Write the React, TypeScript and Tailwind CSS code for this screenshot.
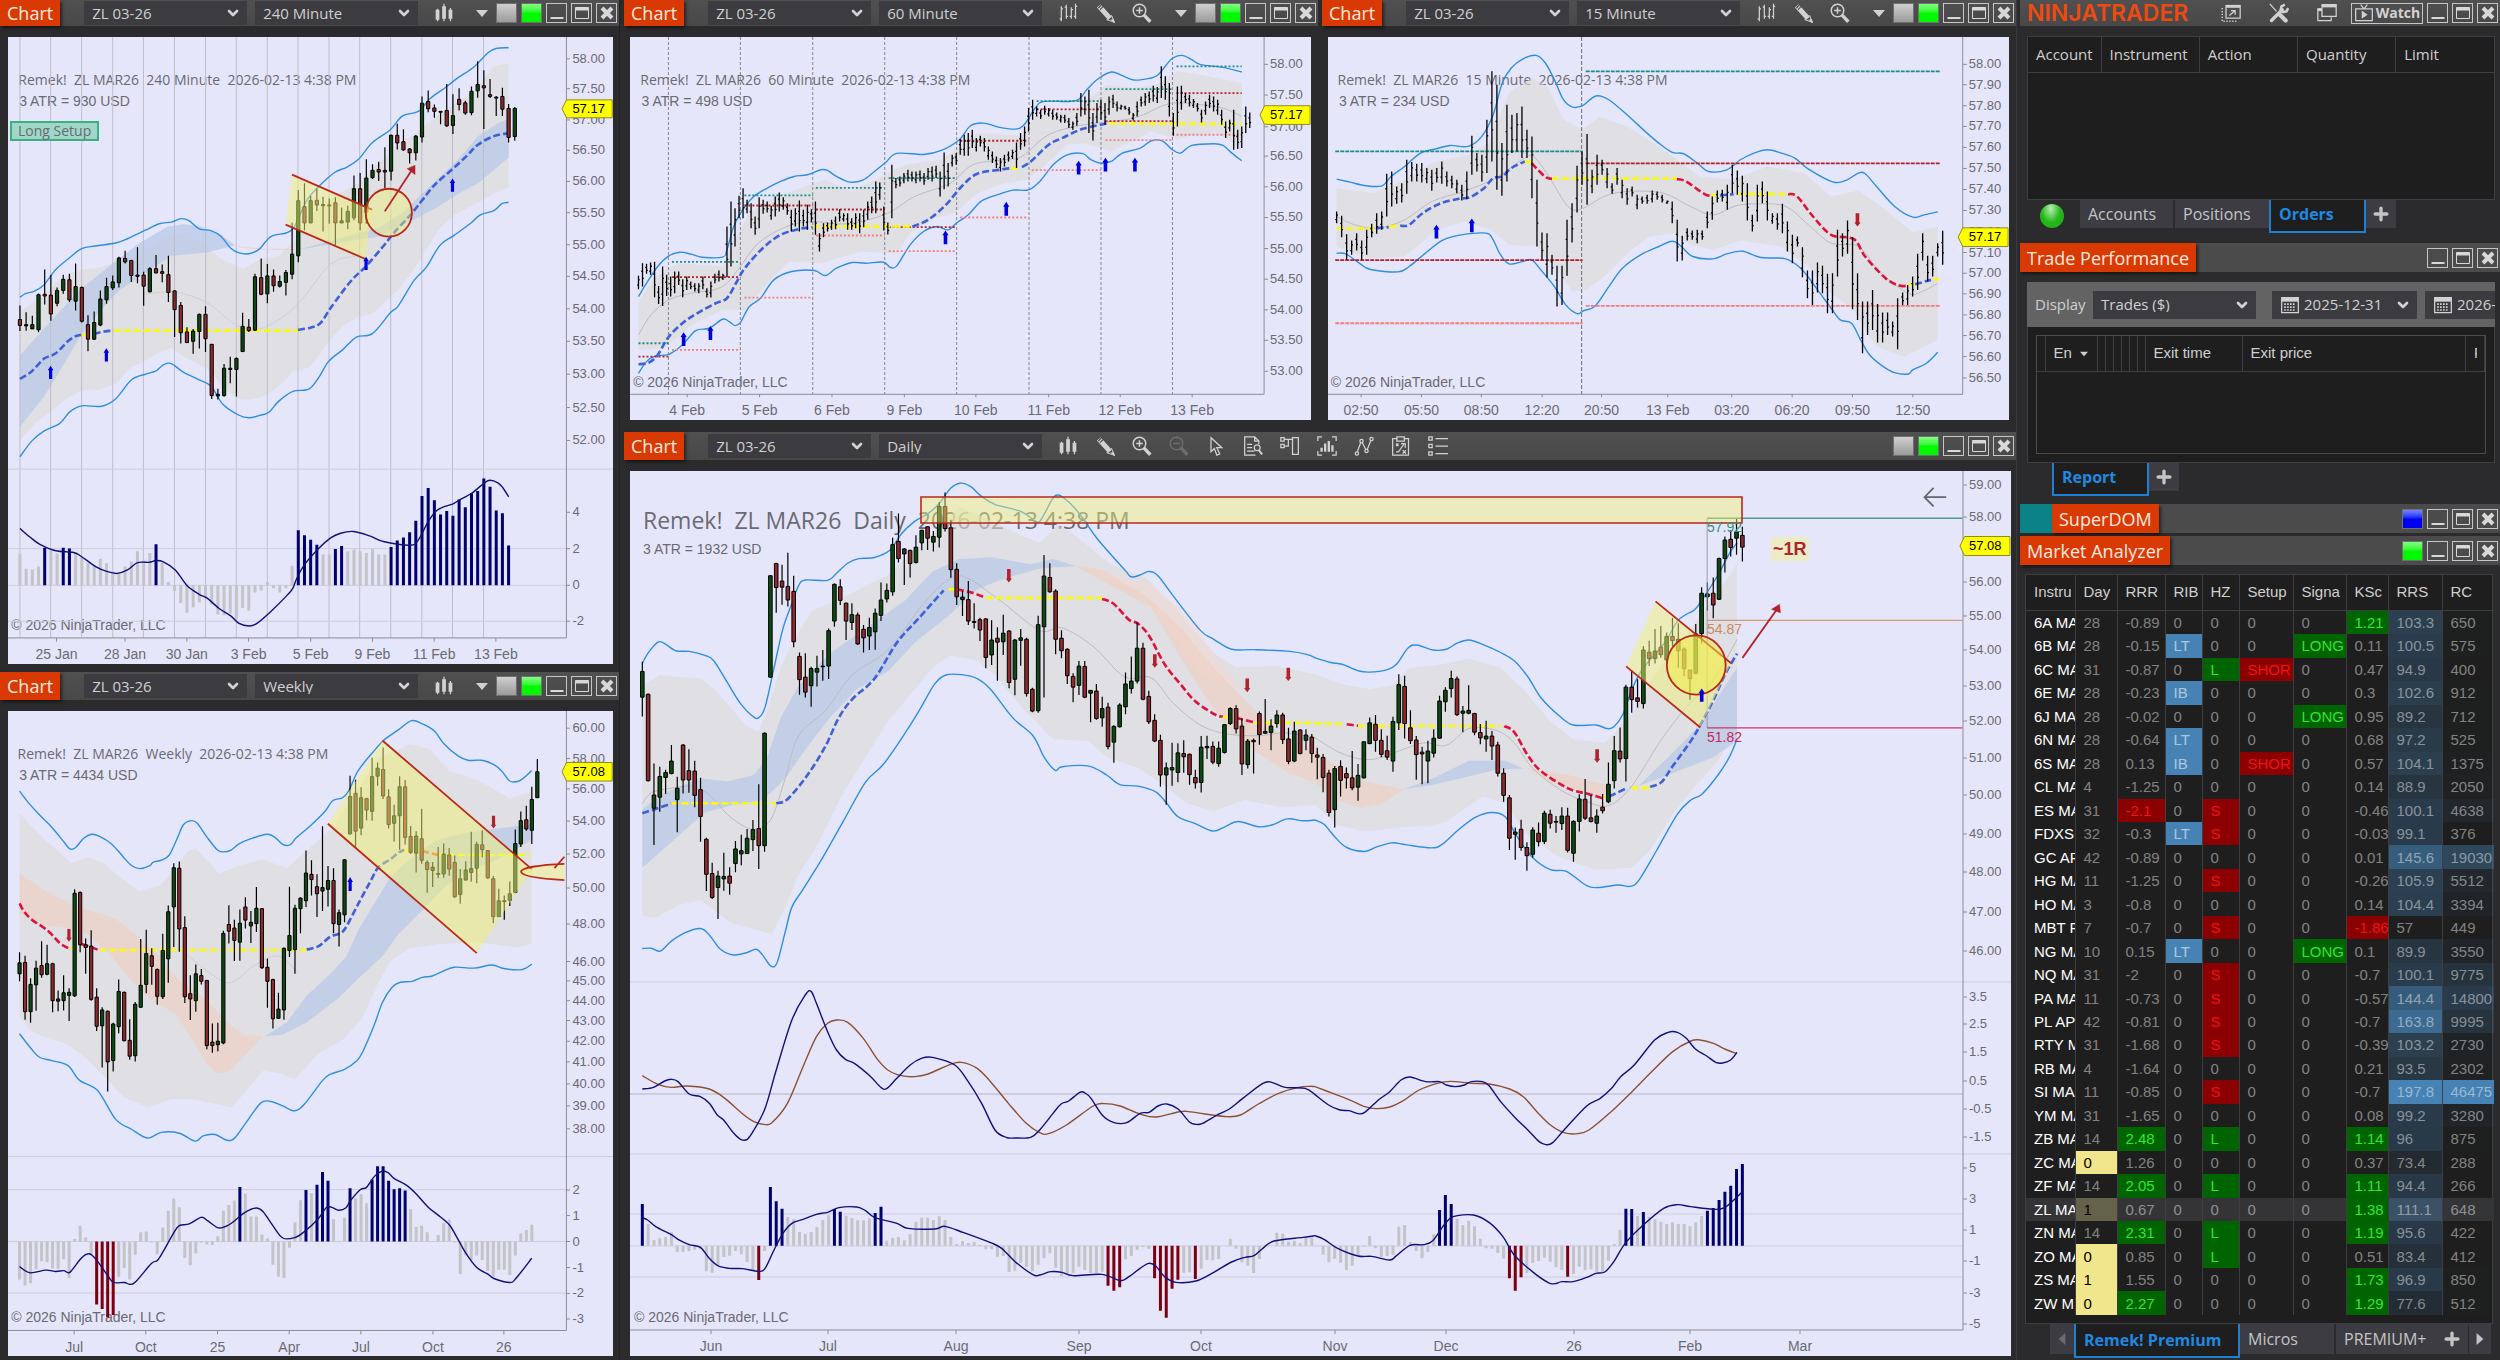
import type { ReactNode } from "react";
import { ChevronDown, Plus } from "lucide-react";

type Label = [string, number];

/* ---------- path helpers ---------- */

const toPoints = (s: string) =>
  s
    .trim()
    .split(/\s+/)
    .map((p) => p.split(",").map(Number));

// Catmull-Rom spline through "x,y x,y ..."
function curve(s: string) {
  const p = toPoints(s);
  let d = `M${p[0][0]} ${p[0][1]}`;
  for (let i = 0; i < p.length - 1; i++) {
    const a = p[i - 1] ?? p[i];
    const b = p[i];
    const c = p[i + 1];
    const e = p[i + 2] ?? c;
    d += `C${b[0] + (c[0] - a[0]) / 6} ${b[1] + (c[1] - a[1]) / 6} ${c[0] - (e[0] - b[0]) / 6} ${c[1] - (e[1] - b[1]) / 6} ${c[0]} ${c[1]}`;
  }
  return d;
}

function Line({ d, color = "#2f8fdc", width = 1.4 }: { d: string; color?: string; width?: number }) {
  return <path d={curve(d)} fill="none" stroke={color} strokeWidth={width} vectorEffect="non-scaling-stroke" />;
}

const GREY = "rgba(218,218,213,.6)";
const UPTREND = "rgba(178,198,230,.65)";
const DOWNTREND = "rgba(240,206,190,.6)";

function Band({ d, color = GREY }: { d: string; color?: string }) {
  return <polygon points={d} fill={color} />;
}

const BLUE = "#4060d8";
const YELLOW = "#fbfb08";
const RED = "#dc143c";

// Trend average, each entry is a leg with its own colour
function Trend({ legs }: { legs: [string, string][] }) {
  return (
    <g fill="none" strokeWidth={2.6} strokeDasharray="7 3">
      {legs.map(([color, d]) => (
        <path key={d} d={curve(d)} stroke={color} vectorEffect="non-scaling-stroke" />
      ))}
    </g>
  );
}

// rows: "g|r high top bottom low"
function Candles({ x0, step, rows, w = 8 }: { x0: number; step: number; rows: string; w?: number }) {
  let wicks = "";
  let up = "";
  let down = "";
  rows
    .trim()
    .split(/\s*,\s*/)
    .forEach((row, i) => {
      const x = x0 + step * i;
      const [h, t, b, l] = row.slice(1).split(" ").map(Number);
      wicks += `M${x} ${h}V${l}`;
      const body = `M${x - w / 2} ${t}h${w}V${b}h${-w}z`;
      if (row[0] === "g") up += body;
      else down += body;
    });
  return (
    <g stroke="#000">
      <path d={wicks} strokeWidth={1.2} vectorEffect="non-scaling-stroke" />
      <path d={up} fill="#0d4a12" vectorEffect="non-scaling-stroke" />
      <path d={down} fill="#8f2a2e" vectorEffect="non-scaling-stroke" />
    </g>
  );
}

// rows: "high-low"
function Sticks({ x0, step, rows }: { x0: number; step: number; rows: string }) {
  let d = "";
  rows
    .trim()
    .split(/\s+/)
    .forEach((row, i) => {
      const [h, l] = row.split("-").map(Number);
      const x = x0 + step * i;
      const o = h + (l - h) * (i % 3 === 0 ? 0.7 : 0.35);
      const c = h + (l - h) * (i % 3 === 0 ? 0.3 : 0.65);
      d += `M${x} ${h}V${l}M${x - 3} ${o}h3M${x} ${c}h3`;
    });
  return <path d={d} stroke="#000" strokeWidth={1.3} fill="none" vectorEffect="non-scaling-stroke" />;
}

// bars: end position of each bar, suffix n = strong up, r = strong down
function Histogram({ x0, step, zero, bars }: { x0: number; step: number; zero: number; bars: string }) {
  const d = { grey: "", n: "", r: "" };
  bars
    .trim()
    .split(/\s+/)
    .forEach((bar, i) => {
      const key = bar.endsWith("n") ? "n" : bar.endsWith("r") ? "r" : "grey";
      d[key] += `M${x0 + step * i} ${zero}V${parseInt(bar)}`;
    });
  return (
    <g strokeWidth={3}>
      <path d={d.grey} stroke="#c3c3c8" vectorEffect="non-scaling-stroke" />
      <path d={d.n} stroke="#00006e" vectorEffect="non-scaling-stroke" />
      <path d={d.r} stroke="#7d0010" vectorEffect="non-scaling-stroke" />
    </g>
  );
}

function Rules({ ys, x1, x2, color = "#cdcddd" }: { ys: number[]; x1: number; x2: number; color?: string }) {
  return <path d={ys.map((y) => `M${x1} ${y}H${x2}`).join("")} stroke={color} vectorEffect="non-scaling-stroke" />;
}

// dotted levels, "x1,x2,y ..."
function Levels({ d, color, dash }: { d: string; color: string; dash: string }) {
  return (
    <path
      d={toPoints(d)
        .map(([a, b, y]) => `M${a} ${y}H${b}`)
        .join("")}
      stroke={color}
      strokeWidth={1.8}
      strokeDasharray={dash}
      vectorEffect="non-scaling-stroke"
    />
  );
}

function Up({ at }: { at: string }) {
  return (
    <g fill="#0000e0">
      {toPoints(at).map(([x, y1, y2]) => (
        <path key={x} d={`M${x} ${y1}l7 ${(y2 - y1) * 0.35}h-3V${y2}h-8V${y1 + (y2 - y1) * 0.35}h-3z`} />
      ))}
    </g>
  );
}

function Down({ at }: { at: string }) {
  return (
    <g fill="#b2222c">
      {toPoints(at).map(([x, y1, y2]) => (
        <path key={x} d={`M${x} ${y2}l7 ${(y1 - y2) * 0.3}h-3V${y1}h-8V${y2 + (y1 - y2) * 0.3}h-3z`} />
      ))}
    </g>
  );
}

function Strokes({ d, color = "#bb2a18", width = 1.8, fill = "none" }: { d: string; color?: string; width?: number; fill?: string }) {
  return <path d={d} fill={fill} stroke={color} strokeWidth={width} vectorEffect="non-scaling-stroke" />;
}

/* ---------- plot frame ---------- */

type PlotProps = {
  box: [number, number, number, number];
  axisX: number;
  axisY: number;
  tick?: number;
  xLabels: Label[];
  yLabels: Label[];
  xTextY: number;
  title: string;
  titleAt: [number, number];
  bigTitle?: boolean;
  atr: string;
  atrAt: [number, number];
  copyrightAt: [number, number];
  price: string;
  tag: [number, number, number, number];
  notes?: { text: string; at: [number, number]; className: string }[];
  children: ReactNode;
};

function Plot(p: PlotProps) {
  const [bx, by, bw, bh] = p.box;
  const at = (x: number, y: number) => ({ left: `${((x - bx) / bw) * 100}%`, top: `${((y - by) / bh) * 100}%` });
  const tick = p.tick ?? 9;
  const [tx, ty, tw, th] = p.tag;
  return (
    <div className="relative min-h-0 flex-1 overflow-hidden bg-[#e6e6fa] font-['Liberation_Sans',sans-serif] text-[#6a6a72]">
      <p
        className={`absolute -translate-y-1/2 whitespace-pre font-['Open_Sans',sans-serif] ${p.bigTitle ? "text-[23px]" : "text-sm"}`}
        style={at(...p.titleAt)}
      >
        {p.title}
      </p>
      <p className="absolute -translate-y-1/2 whitespace-nowrap text-sm" style={at(...p.atrAt)}>
        {p.atr}
      </p>
      <p className="absolute -translate-y-1/2 whitespace-nowrap text-sm" style={at(...p.copyrightAt)}>
        © 2026 NinjaTrader, LLC
      </p>
      {p.yLabels.map(([t, y]) => (
        <span key={t + y} className="absolute -translate-y-1/2 pl-1.5 text-[13px]" style={at(p.axisX, y)}>
          {t}
        </span>
      ))}
      {p.xLabels.map(([t, x]) => (
        <span key={t + x} className="absolute -translate-x-1/2 -translate-y-1/2 whitespace-nowrap text-sm" style={at(x, p.xTextY)}>
          {t}
        </span>
      ))}
      <svg className="absolute inset-0 h-full w-full" viewBox={p.box.join(" ")} preserveAspectRatio="none" aria-hidden="true">
        {p.children}
        <g stroke="#8c8c98">
          <path d={`M${bx} ${p.axisY}H${p.axisX}V${by}`} fill="none" vectorEffect="non-scaling-stroke" />
          <path
            d={
              p.yLabels.map(([, y]) => `M${p.axisX} ${y}h${tick}`).join("") +
              p.xLabels.map(([, x]) => `M${x} ${p.axisY}v${tick}`).join("")
            }
            vectorEffect="non-scaling-stroke"
          />
        </g>
        <path
          d={`M${tx} ${ty}l${tw * 0.09} ${-th / 2}h${tw * 0.91}v${th}h${-tw * 0.91}z`}
          fill="#ffff00"
          stroke="#8c8c20"
          vectorEffect="non-scaling-stroke"
        />
      </svg>
      <span className="absolute -translate-y-1/2 pl-1.5 text-[13px] text-black" style={at(p.axisX, ty)}>
        {p.price}
      </span>
      {p.notes?.map((n) => (
        <span key={n.text} className={`absolute -translate-y-1/2 whitespace-nowrap ${n.className}`} style={at(...n.at)}>
          {n.text}
        </span>
      ))}
    </div>
  );
}

/* ---------- toolbar icons ---------- */

function Icon({ name, dim }: { name: string; dim?: boolean }) {
  const shapes: Record<string, ReactNode> = {
    candles: (
      <g fill="currentColor" stroke="none">
        <path d="M2 8h4.500v12H2zM9.800 4h4.500v15H9.800zM17.500 8H22v11h-4.500z" />
        <path d="M3.500 7h1.500v15H3.500zM11.200 1h1.500v21h-1.500zM19 6h1.500v16H19z" />
      </g>
    ),
    bars: <path d="M4 4v18M2 19h2M4 7h2M10 2v17M8 5h2M10 16h2M16 5v14M14 16h2M16 8h2M21 1v18M19 16h2M21 4h2" />,
    pencil: (
      <>
        <path d="M4.500 3.500L18 18.500" strokeWidth={6} />
        <path d="M4 6l4-4M6 8l4-4" stroke="#4b4b4b" />
        <path d="M14 20l6-5 3 8z" strokeWidth={1.2} />
        <path d="M20 20.500l3 2.500-1-3z" fill="currentColor" />
      </>
    ),
    zoomIn: (
      <>
        <circle cx="9" cy="9" r="7.500" strokeWidth={1.8} />
        <path d="M9 5v8M5 9h8" strokeWidth={1.8} />
        <path d="M14.500 14.500L22 22.500" strokeWidth={4} />
      </>
    ),
    zoomOut: (
      <>
        <circle cx="9" cy="9" r="7.500" strokeWidth={1.8} />
        <path d="M5 9h8" strokeWidth={1.8} />
        <path d="M14.500 14.500L22 22.500" strokeWidth={4} />
      </>
    ),
    cursor: <path d="M6 2v17l4-4 3 8 3.500-1.500-3.500-7.500h6z" />,
    doc: (
      <>
        <path d="M15 23H2V1h12l5 5v4M14 1v5h5M5 10h6M5 14h6M5 18h9" />
        <circle cx="17" cy="14" r="3.500" />
        <path d="M19 17l4 5" strokeWidth={2.4} />
      </>
    ),
    panel: <path d="M1 2h4v4H1zM1 10h4v4H1zM5 4h10M5 12h5V4M15 2h7v20h-7z" />,
    chart: (
      <>
        <path d="M6 1H1v5M18 1h5v5M1 18v5h5M23 18v5h-5" />
        <path d="M5.500 19v-5M9.800 19V9M14.200 19V6M18.500 19v-8" strokeWidth={2.8} />
      </>
    ),
    nodes: (
      <>
        <path d="M4 19l4-11M10 8l4 8M16 16l4-10" />
        <circle cx="3.500" cy="21" r="2" />
        <circle cx="9" cy="6" r="2" />
        <circle cx="15" cy="18" r="2" />
        <circle cx="21" cy="3.500" r="2" />
      </>
    ),
    clipboard: (
      <>
        <path d="M8 3H2v20h19V3h-6M7 1h9v5H7z" />
        <path d="M6 9l3 3M9 9l-3 3M14 17l4 4M18 17l-4 4M6 19h3l7-10M12 9h5v5" />
      </>
    ),
    list: <path d="M1 1h4v4H1zM1 10h4v4H1zM1 19h4v4H1zM9 3h15M9 12h15M9 21h15" />,
    newWindow: (
      <>
        <path d="M6 3h17v15H6z" />
        <path d="M6 4h17" strokeWidth={3.5} />
        <path d="M10 15l6-5M12 9h5v5" />
        <path d="M1.500 6v16H19" strokeDasharray="1.5 2" strokeWidth={1.8} />
      </>
    ),
    tools: (
      <>
        <path d="M1 1l8 9" strokeWidth={1.6} />
        <path d="M13 14l7 7" strokeWidth={5} strokeLinecap="round" />
        <path d="M3 21L16 8" strokeWidth={4} strokeLinecap="round" />
        <path d="M19 2l-4 2-1 4 3 3 4-1 2-4" strokeWidth={3} />
      </>
    ),
    windows: (
      <>
        <path d="M6 2h17v14H6z" />
        <path d="M6 3.500h17" strokeWidth={3.5} />
        <path d="M5 7H1v14h16v-4" />
        <path d="M1 8h5" strokeWidth={3.5} />
      </>
    ),
    tv: (
      <>
        <path d="M2 7h20v14H2zM8 2l4 5 4-5" />
        <path d="M10 10.500l5 3.500-5 3.500z" fill="currentColor" />
      </>
    ),
    calendar: (
      <>
        <path d="M2 3h20v18H2z" />
        <path d="M2 5.500h20" strokeWidth={5} />
        <path d="M5 11h14M5 14.500h14M5 18h14" strokeDasharray="2 1.5" strokeWidth={2} />
      </>
    ),
  };
  return (
    <svg
      viewBox="0 0 24 24"
      className={`size-5 ${dim ? "text-[#6c6c6c]" : "text-[#d2d2d2]"}`}
      fill="none"
      stroke="currentColor"
      strokeWidth={1.5}
      aria-hidden="true"
    >
      {shapes[name]}
    </svg>
  );
}

/* ---------- window chrome ---------- */

const swatches = {
  grey: "bg-linear-to-b from-[#cfcfcf] to-[#9b9b9b]",
  green: "bg-linear-to-b from-[#7dff7d] via-[#00f800] to-[#00f800]",
  blue: "bg-linear-to-b from-[#8080ff] via-[#0000f0] to-[#0000f0]",
};

function WindowButtons({ colors = [] }: { colors?: (keyof typeof swatches)[] }) {
  const box = "flex h-5 w-[21px] items-center justify-center border border-[#c6c6c6] text-[#d8d8d8]";
  return (
    <div className="flex shrink-0 items-center gap-1">
      {colors.map((c) => (
        <button key={c} aria-label={`Link ${c}`} className={`h-5 w-[21px] border border-[#707070] ${swatches[c]}`} />
      ))}
      <button aria-label="Minimize" className={box}>
        <svg viewBox="0 0 16 16" className="size-4" aria-hidden="true">
          <path d="M1.500 13h13" stroke="currentColor" strokeWidth="2" />
        </svg>
      </button>
      <button aria-label="Maximize" className={box}>
        <svg viewBox="0 0 16 16" className="size-4" aria-hidden="true">
          <path d="M1.500 2.500h13v11h-13z" fill="none" stroke="currentColor" />
          <path d="M1.500 4h13" stroke="currentColor" strokeWidth="3" />
        </svg>
      </button>
      <button aria-label="Close" className={box}>
        <svg viewBox="0 0 16 16" className="size-4" aria-hidden="true">
          <path d="M3 3l10 10M13 3L3 13" stroke="currentColor" strokeWidth="4" />
        </svg>
      </button>
    </div>
  );
}

function Tag({ children }: { children: ReactNode }) {
  return (
    <h2 className="flex items-center self-stretch bg-[#d93a04] px-[7px] text-lg leading-none text-[#fbe9e0] shadow-[2px_2px_3px_#0008]">
      {children}
    </h2>
  );
}

function Picker({ id, label, value, icon }: { id?: string; label?: string; value: string; icon?: boolean }) {
  return (
    <div className="relative flex h-full items-center bg-[#3c3c40]">
      {icon && (
        <span className="absolute left-2">
          <Icon name="calendar" />
        </span>
      )}
      <select
        id={id}
        aria-label={label}
        className={`h-full w-full appearance-none bg-transparent pr-7 text-[15px] leading-none text-[#cfcfcf] outline-none ${icon ? "pl-8" : "pl-2"}`}
      >
        <option>{value}</option>
      </select>
      <ChevronDown className="pointer-events-none absolute right-1.5 size-4 text-[#d2d2d2]" strokeWidth={4} />
    </div>
  );
}

function ChartHeader({ period, tools, more = true, top }: { period: string; tools: string[]; more?: boolean; top?: boolean }) {
  return (
    <header className={`flex shrink-0 items-center bg-linear-to-b from-[#505050] to-[#484848] pr-0.5 ${top ? "h-[26px]" : "h-7"}`}>
      <Tag>Chart</Tag>
      <div className="ml-6 h-6 w-[163px] shrink-0">
        <Picker label="Instrument" value="ZL 03-26" />
      </div>
      <div className="ml-2 h-6 w-[163px] shrink-0">
        <Picker label="Interval" value={period} />
      </div>
      <div className="ml-[7px] flex">
        {tools.map((t) => (
          <button key={t} aria-label={t} className="flex w-[37px] justify-center">
            <Icon name={t} dim={t === "zoomOut"} />
          </button>
        ))}
      </div>
      <div className="flex-1" />
      {more && (
        <button aria-label="More" className="mr-2 w-3">
          <svg viewBox="0 0 12 7" className="h-[7px] w-3 fill-[#d2d2d2]" aria-hidden="true">
            <path d="M0 0h12L6 7z" />
          </svg>
        </button>
      )}
      <WindowButtons colors={["grey", "green"]} />
    </header>
  );
}

/* ---------- charts ---------- */

function Chart240() {
  return (
    <Plot
      box={[20, 88, 1519, 1467]}
      axisX={1422}
      axisY={1494}
      xTextY={1531}
      xLabels={[["25 Jan", 142], ["28 Jan", 314], ["30 Jan", 469], ["3 Feb", 624], ["5 Feb", 780], ["9 Feb", 935], ["11 Feb", 1090], ["13 Feb", 1245]]}
      yLabels={[["58.00", 139], ["57.50", 209], ["57.00", 282], ["56.50", 353], ["56.00", 426], ["55.50", 499], ["55.00", 574], ["54.50", 648], ["54.00", 724], ["53.50", 800], ["53.00", 877], ["52.50", 955], ["52.00", 1032], ["4", 1200], ["2", 1285], ["0", 1371], ["-2", 1455]]}
      title="Remek!  ZL MAR26  240 Minute  2026-02-13 4:38 PM"
      titleAt={[46, 188]}
      atr="3 ATR = 930 USD"
      atrAt={[48, 237]}
      copyrightAt={[28, 1463]}
      price="57.17"
      tag={[1411, 256, 126, 42]}
      notes={[{ text: "Long Setup", at: [25, 307], className: "border-2 border-[#3fae84] bg-[#9fd8c6] px-1.5 font-['Open_Sans',sans-serif] text-sm leading-4" }]}
    >
      <Band d="50,730 100,700 150,655 200,632 250,628 300,610 350,600 400,560 430,550 460,548 500,565 530,590 560,610 610,630 650,610 700,600 740,565 770,520 800,490 850,455 900,430 940,390 980,360 1010,330 1050,310 1100,270 1150,240 1190,215 1240,155 1277,150 1277,440 1240,455 1180,485 1140,505 1105,535 1070,585 1040,630 1000,680 970,705 935,735 895,745 860,765 825,800 800,835 775,862 735,870 700,905 660,930 625,937 600,935 560,910 530,870 500,855 460,835 430,815 390,830 360,848 330,860 290,900 250,913 205,915 160,938 120,970 90,990 50,1032" />
      <Band color={UPTREND} d="50,833 130,750 200,680 280,620 350,570 420,532 460,526 500,530 550,548 590,575 520,592 430,600 380,630 300,680 250,730 200,790 150,870 110,930 50,1000" />
      <Band color={UPTREND} d="750,585 850,560 950,535 1010,500 1060,455 1150,375 1200,320 1250,290 1277,280 1277,370 1200,430 1150,455 1100,485 1040,515 950,555 850,570" />
      <path d={"M" + [50, 127, 205, 283, 360, 438, 516, 593, 671, 748, 826, 903, 981, 1059, 1136, 1214].map((x) => `${x} 88V1494`).join("M")} stroke="#bdbdcb" vectorEffect="non-scaling-stroke" />
      <Rules ys={[1099]} x1={20} x2={1539} />
      <Rules ys={[1285, 1371, 1455]} x1={20} x2={1422} />
      <Line color="#cfcfd6" width={1} d="360,690 440,685 520,710 590,760 650,772 740,720 830,620 900,600" />
      <Line color="#efd2c4" width={1} d="590,578 660,584 740,585" />
      <Line d="50,697 65,688 85,683 110,668 140,632 175,604 205,583 240,577 290,570 320,560 365,540 400,525 430,521 455,513 475,518 500,537 530,541 555,555 580,583 600,593 625,595 650,585 680,555 720,546 740,530 770,470 800,438 840,405 870,393 900,374 935,335 980,305 1010,273 1050,262 1080,232 1120,205 1150,183 1190,158 1225,125 1245,115 1277,113" />
      <Line d="50,1070 80,1033 110,1010 150,992 175,965 205,951 255,952 290,935 330,890 365,877 390,870 410,855 430,852 460,872 500,890 530,905 560,948 600,973 625,979 650,974 675,966 700,940 735,917 775,912 800,885 825,847 860,820 895,790 935,782 980,733 1000,717 1040,657 1070,627 1105,575 1140,552 1180,525 1205,505 1240,494 1260,478 1277,475" />
      <Trend
        legs={[
          [BLUE, "50,888 80,870 110,841 140,828 170,800 190,788 205,785"],
          [YELLOW, "205,785 235,787"],
          [BLUE, "235,783 262,777 285,775"],
          [YELLOW, "285,775 748,775"],
          [BLUE, "748,773 780,768 805,757 830,722 880,660 918,625 960,580 990,545 1030,505 1060,470 1090,435 1130,402 1170,368 1200,340 1240,320 1277,313"],
        ]}
      />
      <Candles
        x0={50}
        step={15.53}
        rows="r716 749 763 776,g732 761 764 775,g740 761 771 771,g688 691 773 779,r632 690 694 714,r645 692 736 752,g674 681 711 718,g644 655 681 689,r642 656 703 708,g618 672 706 728,r672 674 753 756,r739 761 795 823,g730 756 795 797,g681 701 762 765,g651 672 703 712,g646 661 675 680,g602 605 663 674,r588 606 614 618,r609 611 646 661,r580 645 648 664,r637 645 671 717,g627 630 684 686,r598 630 640 641,r620 637 641 662,r600 644 686 708,r681 682 726 790,r708 716 780 805,r767 778 803 803,g771 776 800 829,g735 737 777 817,r718 737 794 825,r806 807 927 935,g911 924 928 936,g853 863 927 930,g836 863 866 898,g838 840 866 929,g733 765 824 824,r748 767 775 778,g642 649 774 775,r606 651 690 692,g619 647 689 711,r632 647 670 684,g646 660 671 674,g633 639 662 693,g522 596 643 655,g446 471 600 615,r430 485 523 540,g460 471 523 523,r442 470 481 495,r462 480 483 543,r466 481 483 525,r463 476 523 575,g487 518 523 524,g483 496 521 537,g412 443 511 517,r406 443 523 540,g374 418 498 525,g386 400 417 420,r380 398 404 425,r346 400 404 442,g316 318 402 424,r291 318 336 351,r304 333 352 354,r348 350 359 384,g317 320 359 377,g227 243 322 335,r213 239 256 264,r246 254 262 277,r262 262 264 292,r198 260 296 298,g222 272 295 315,r208 234 246 260,r237 242 266 270,g204 215 265 271,g145 199 214 230,r166 202 207 303,r186 223 227 231,r226 229 231 273,r207 227 257 273,r245 255 323 335,g252 255 321 331"
      />
      <polygon points="733,410 932,491 918,608 718,528" fill="#f2f276" fillOpacity=".5" />
      <Strokes d="M733 410L934 492M717 527L919 608" />
      <ellipse cx="976" cy="499" rx="58" ry="56" fill="#f2f276" fillOpacity=".45" stroke="#b8281e" strokeWidth="1.8" vectorEffect="non-scaling-stroke" />
      <Strokes color="#b2222c" d="M966 496L1032 402" />
      <path d="M1042 388l0 22-20-14z" fill="#b2222c" stroke="#b2222c" />
      <Up at="127,857,888 267,816,847 919,602,633 1136,419,450" />
      <Histogram
        x0={50}
        step={15.53}
        zero={1371}
        bars="1298 1332 1334 1327 1283n 1290 1296 1283n 1285n 1295 1305 1318 1324 1309 1319 1338 1340 1327 1315 1291 1313 1295 1275n 1318 1363 1384 1413 1435 1423 1411 1399 1416 1439 1441 1437 1450 1424 1430 1388 1383 1363 1378 1388 1378 1325 1242n 1254n 1264n 1276n 1299 1299 1286n 1279n 1291 1287 1291 1295 1286 1299 1299 1281n 1266n 1259n 1247n 1220n 1162n 1143n 1172n 1205n 1197n 1208n 1170n 1188n 1155n 1150n 1121n 1140n 1196n 1202n 1278n"
      />
      <Line color="#10107a" d="50,1238 75,1258 100,1275 140,1290 185,1294 205,1304 240,1327 270,1339 295,1343 320,1335 345,1318 375,1317 391,1313 410,1316 440,1335 470,1372 500,1392 520,1401 550,1425 580,1443 600,1460 625,1466 645,1460 680,1432 720,1395 735,1378 745,1355 765,1322 800,1285 830,1260 855,1249 888,1245 930,1256 965,1269 1030,1277 1050,1265 1075,1222 1095,1197 1115,1187 1136,1181 1152,1172 1185,1155 1215,1132 1230,1125 1250,1131 1262,1142 1277,1164" />
    </Plot>
  );
}

function ChartWeekly() {
  return (
    <Plot
      box={[20, 93, 1519, 1465]}
      axisX={1422}
      axisY={1500}
      xTextY={1537}
      xLabels={[["Jul", 186], ["Oct", 366], ["25", 546], ["Apr", 726], ["Jul", 906], ["Oct", 1087], ["26", 1265]]}
      yLabels={[["60.00", 132], ["58.00", 201], ["56.00", 270], ["54.00", 343], ["52.00", 418], ["50.00", 495], ["48.00", 577], ["46.00", 662], ["45.00", 706], ["44.00", 751], ["43.00", 796], ["42.00", 843], ["41.00", 890], ["40.00", 940], ["39.00", 990], ["38.00", 1042], ["2", 1181], ["1", 1239], ["0", 1298], ["-1", 1357], ["-2", 1416], ["-3", 1474]]}
      title="Remek!  ZL MAR26  Weekly  2026-02-13 4:38 PM"
      titleAt={[44, 190]}
      atr="3 ATR = 4434 USD"
      atrAt={[48, 239]}
      copyrightAt={[28, 1470]}
      price="57.08"
      tag={[1411, 231, 126, 42]}
    >
      <Band d="49,325 100,375 180,438 220,425 260,438 300,470 350,503 400,490 430,462 470,412 490,405 520,432 550,462 600,445 660,430 720,450 770,410 840,355 890,280 950,200 1030,168 1080,180 1130,230 1200,250 1280,292 1335,275 1335,620 1300,630 1200,618 1100,622 1030,632 980,660 950,710 910,790 860,840 800,870 740,930 700,915 660,910 600,975 580,993 540,985 480,975 430,975 370,993 310,970 270,930 220,885 170,850 110,833 75,818 49,785" />
      <Band color={DOWNTREND} d="49,462 120,505 200,540 290,565 340,600 400,650 450,705 520,750 570,800 610,828 660,833 620,870 575,912 545,916 520,895 480,835 440,780 380,750 330,705 270,640 220,600 170,585 110,580 49,552" />
      <Band color={UPTREND} d="665,832 720,800 770,740 830,690 870,650 900,590 940,530 980,470 1040,420 1100,385 1160,372 1230,362 1335,350 1335,385 1290,410 1250,430 1180,455 1120,490 1060,545 1000,600 960,650 900,700 850,745 770,800 710,828" />
      <Rules ys={[1105]} x1={20} x2={1539} />
      <Rules ys={[1180, 1298, 1415]} x1={20} x2={1422} />
      <Line color="#cfcfd6" width={1} d="460,640 530,690 580,710 640,670 700,650 750,690" />
      <Line d="49,275 70,300 100,330 130,357 160,390 175,406 190,403 210,382 230,373 250,378 280,395 310,425 330,444 350,451 375,445 385,436 405,432 425,420 445,382 460,352 480,342 495,348 520,380 545,408 560,413 580,409 600,395 630,383 670,373 690,380 710,396 728,397 745,380 780,353 815,322 835,297 860,290 875,275 895,235 910,215 935,188 965,158 1000,136 1033,115 1060,122 1090,138 1115,168 1150,195 1175,205 1210,205 1240,215 1260,230 1280,252 1300,253 1315,245 1335,228" />
      <Line d="49,826 80,862 100,880 130,887 170,898 200,932 245,955 290,1020 330,1043 370,1063 405,1050 450,1052 490,1070 510,1058 540,1055 570,1068 590,1062 620,1025 655,983 680,980 710,990 740,1001 765,985 810,932 830,918 865,907 895,888 910,868 940,805 960,755 985,720 1005,709 1035,707 1060,698 1085,695 1110,685 1140,675 1190,677 1235,670 1265,678 1305,681 1320,677 1335,668" />
      <Trend
        legs={[
          [RED, "49,530 60,548 80,567 120,592 150,620 178,635"],
          [YELLOW, "178,635 190,624 205,622"],
          [RED, "205,622 245,635"],
          [YELLOW, "250,636 770,636"],
          [BLUE, "770,635 800,627 830,605 855,598 870,582 900,530 930,480 950,448 980,430 1000,415 1015,408"],
          [YELLOW, "1015,410 1060,410"],
          ["#e8602c", "1060,411 1100,420"],
          [YELLOW, "1100,420 1330,420"],
        ]}
      />
      <Candles
        x0={49}
        step={13.83}
        rows="g641 665 690 707,r649 664 776 794,g700 714 776 801,g660 677 715 774,r616 671 692 699,g624 667 691 693,r665 667 751 777,g728 747 752 775,g693 733 751 773,g723 732 739 797,g498 507 740 742,r503 505 624 641,r610 624 630 690,r591 627 748 751,r723 743 809 820,g766 772 808 903,r773 775 890 957,g801 804 887 912,g703 730 810 825,r730 732 842 843,r793 841 877 885,g754 759 876 889,g611 716 766 766,g590 644 714 734,r632 649 673 715,r678 680 741 760,g599 637 742 747,g535 549 656 710,g439 449 538 629,r435 450 588 640,r559 585 742 756,r693 735 747 795,g669 690 751 776,r679 694 707 714,r704 705 853 861,r803 845 853 869,g801 843 851 866,g592 598 847 850,r534 578 593 621,r567 586 614 661,g544 575 618 660,r516 538 568 587,g547 573 581 620,g493 541 576 595,r541 542 676 679,r655 675 707 767,r701 703 792 814,g733 770 791 792,g630 632 772 794,g492 603 637 652,g533 541 635 690,g516 518 542 598,g410 461 524 538,r432 464 476 512,r464 492 508 561,g355 494 502 547,g445 478 498 537,r450 478 576 598,g544 551 578 628,g430 431 556 573,g240 287 372 374,r249 280 366 403,g266 290 359 375,r290 292 318 341,g199 242 321 342,g210 223 241 263,r176 226 286 293,r271 288 351 360,g306 331 348 390,g241 265 331 408,r250 265 380 396,r354 378 414 418,g366 377 416 460,r315 383 432 440,r432 437 453 506,g436 448 455 493,r402 462 464 473,g394 418 463 472,r404 420 452 467,r421 437 515 518,g452 474 510 531,g434 454 477 478,g367 451 460 481,g390 396 450 484,r364 397 408 425,r409 410 472 474,r468 474 560 575,g497 524 560 560,g512 524 526 567,g480 508 523 536,g362 394 505 507,g321 342 395 402,r308 340 361 365,g265 294 364 395,g202 231 290 290"
      />
      <polygon points="960,160 1335,452 1197,643 823,349" fill="#f2f276" fillOpacity=".5" />
      <Strokes d="M960 160L1335 452M823 349L1197 643" />
      <Strokes fill="#f2f27680" d="M1417 440C1350 442 1308 450 1308 458C1310 468 1350 474 1417 477M1392 450L1417 424" />
      <Down at="173,588,617 1239,331,360" />
      <Up at="879,470,502" />
      <Histogram
        x0={49}
        step={13.83}
        zero={1298}
        bars="1384 1398 1393 1361 1343 1345 1359 1360 1338 1381 1292 1262 1289 1330 1441r 1451r 1470r 1465r 1378 1358 1384 1328 1277 1275 1300 1327 1266 1228 1200 1220 1335 1352 1325 1301 1305 1306 1286 1228 1215 1205 1174n 1189 1241 1241 1282 1291 1351 1378 1381 1312 1254 1204 1181n 1188 1169n 1140n 1160n 1247 1299 1244 1177n 1200 1190 1211 1157n 1127n 1127n 1160n 1179n 1177n 1182n 1224 1265 1262 1277 1299 1283 1256 1248 1300 1372 1330 1340 1330 1340 1365 1378 1362 1362 1374 1330 1280 1272 1260"
      />
      <Line color="#10107a" d="49,1355 75,1369 115,1363 140,1366 160,1364 175,1368 200,1340 215,1328 228,1327 245,1343 270,1375 285,1391 312,1391 325,1395 340,1390 380,1348 395,1341 410,1320 435,1280 450,1262 475,1258 505,1243 520,1250 545,1266 560,1266 580,1257 615,1232 643,1222 660,1230 685,1262 710,1290 740,1289 765,1275 800,1245 820,1220 835,1221 850,1227 868,1222 880,1205 905,1180 920,1175 940,1150 960,1138 975,1142 990,1155 1020,1170 1045,1190 1075,1220 1100,1238 1128,1260 1145,1285 1170,1325 1197,1357 1225,1372 1240,1382 1280,1391 1295,1382 1335,1336" />
    </Plot>
  );
}

function Chart60() {
  return (
    <Plot
      box={[23, 112, 1524, 1148]}
      axisX={1442}
      axisY={1183}
      xTextY={1230}
      xLabels={[["4 Feb", 151], ["5 Feb", 313], ["6 Feb", 475], ["9 Feb", 637], ["10 Feb", 797], ["11 Feb", 960], ["12 Feb", 1120], ["13 Feb", 1281]]}
      yLabels={[["58.00", 194], ["57.50", 286], ["57.00", 381], ["56.50", 469], ["56.00", 561], ["55.50", 653], ["55.00", 746], ["54.50", 838], ["54.00", 930], ["53.50", 1021], ["53.00", 1114]]}
      title="Remek!  ZL MAR26  60 Minute  2026-02-13 4:38 PM"
      titleAt={[46, 240]}
      atr="3 ATR = 498 USD"
      atrAt={[49, 303]}
      copyrightAt={[30, 1147]}
      price="57.17"
      tag={[1433, 346, 112, 56]}
    >
      <Band d="42,905 80,830 130,790 230,800 250,740 290,640 350,590 460,540 520,575 600,520 640,495 720,480 800,400 900,408 930,350 1020,330 1090,255 1150,265 1200,255 1250,215 1300,225 1392,250 1392,450 1340,400 1280,405 1250,420 1190,395 1100,455 1040,430 1000,435 950,500 910,540 860,550 800,580 750,640 700,655 650,700 620,760 540,755 450,790 380,785 330,850 280,930 230,930 160,975 100,1045 42,1050" />
      <path d={"M" + [109, 270, 432, 593, 754, 916, 1077, 1237].map((x) => `${x} 112V1183`).join("M")} stroke="#85858f" strokeDasharray="3 2" vectorEffect="non-scaling-stroke" />
      <Line color="#bcbcc2" width={1} d="42,1005 70,945 110,900 160,880 210,870 240,850 270,800 310,730 370,682 430,665 480,672 530,668 600,640 660,590 740,550 790,495 860,480 900,470 960,405 1040,375 1150,355 1230,312 1300,315 1350,325 1392,350" />
      <Line d="42,890 60,850 85,800 110,768 135,757 160,763 185,772 230,772 240,750 255,680 275,630 300,590 330,565 360,545 390,530 420,525 450,510 465,512 485,530 515,547 545,540 570,515 595,488 620,461 680,464 720,452 760,420 785,378 815,370 850,383 885,388 905,375 930,325 950,305 1020,303 1045,270 1070,238 1100,217 1125,228 1150,241 1185,236 1205,225 1235,178 1258,167 1280,180 1300,195 1350,203 1392,217" />
      <Line d="42,1120 60,1085 80,1068 110,1063 140,1035 170,992 200,985 230,958 245,965 258,977 270,968 290,920 315,895 345,840 385,815 435,812 460,827 485,805 520,788 550,790 590,787 605,802 620,798 650,735 680,695 710,680 735,690 755,668 780,645 810,603 850,583 880,571 915,570 940,545 970,495 1000,466 1035,461 1055,480 1075,490 1100,485 1125,460 1165,445 1190,423 1215,424 1235,448 1255,460 1280,437 1330,432 1350,437 1370,460 1392,483" />
      <Levels color="#1c8c8c" dash="2 2" d="42,111,1030 117,270,786 279,433,587 439,593,564 602,754,535 933,1077,304 1087,1237,268 1246,1392,200" />
      <Levels color="#b2202c" dash="2 2" d="42,111,1070 117,268,832 279,433,617 439,593,629 602,754,682 762,915,423 933,1077,329 1087,1237,364 1246,1392,280" />
      <Levels color="#f08080" dash="2 2" d="117,270,1050 279,433,893 439,593,707 602,754,754 762,915,653 922,1077,511 1087,1237,421 1246,1392,405" />
      <Trend
        legs={[
          [BLUE, "42,1093 65,1088 85,1065 110,1010 145,965 180,935 215,910 240,895 260,850 280,805 320,745 360,705 400,688 432,682"],
          [YELLOW, "432,680 655,680"],
          [BLUE, "655,680 690,660 730,615 765,560 800,522 850,510 875,505"],
          [YELLOW, "875,506 895,506"],
          [BLUE, "900,502 920,485 960,435 990,415 1035,388 1095,370"],
          [YELLOW, "1095,371 1392,373"],
        ]}
      />
      <Sticks
        x0={42}
        step={9}
        rows="828-868 790-860 792-822 788-825 786-892 858-912 800-918 825-888 830-890 815-880 815-855 838-892 830-870 845-868 850-875 850-880 830-868 865-893 845-893 822-850 812-845 822-840 680-832 605-800 625-740 588-655 565-655 600-640 610-685 650-705 592-685 600-642 605-638 618-660 590-650 578-635 592-630 610-645 630-695 625-680 602-695 630-680 615-690 628-668 605-705 700-755 670-712 668-695 660-690 650-688 628-665 640-665 640-690 655-690 640-685 640-700 630-682 605-660 590-640 545-640 548-600 620-692 668-704 495-655 535-565 530-560 520-550 510-545 515-545 515-550 512-545 520-555 505-540 500-545 498-535 515-590 458-568 490-560 465-500 460-495 418-465 405-468 400-468 390-445 415-455 408-440 415-455 440-480 455-490 470-505 475-515 465-500 455-485 450-478 428-505 400-450 380-440 325-395 300-360 320-350 330-358 318-345 325-350 330-360 338-360 345-368 345-370 355-385 365-390 340-378 280-350 290-345 270-400 340-422 310-370 300-360 310-375 290-345 285-325 305-335 315-330 318-330 322-345 340-362 305-350 290-320 280-318 275-310 258-305 262-310 200-295 230-300 250-350 340-408 260-380 258-330 280-310 285-320 298-325 310-335 330-368 305-345 285-325 290-335 300-345 330-375 365-415 360-395 330-450 390-448 380-445 320-400 338-385"
      />
      <Up at="143,997,1038 203,978,1020 729,692,733 865,606,648 1027,483,524 1087,474,515 1153,474,515" />
    </Plot>
  );
}

function Chart15() {
  return (
    <Plot
      box={[31, 112, 1501, 1148]}
      axisX={1430}
      axisY={1183}
      xTextY={1230}
      xLabels={[["02:50", 104], ["05:50", 237], ["08:50", 369], ["12:20", 503], ["20:50", 634], ["13 Feb", 780], ["03:20", 921], ["06:20", 1054], ["09:50", 1187], ["12:50", 1320]]}
      yLabels={[["58.00", 194], ["57.90", 255], ["57.80", 318], ["57.70", 380], ["57.60", 443], ["57.50", 506], ["57.40", 569], ["57.30", 632], ["57.20", 695], ["57.10", 758], ["57.00", 820], ["56.90", 882], ["56.80", 945], ["56.70", 1007], ["56.60", 1070], ["56.50", 1134]]}
      title="Remek!  ZL MAR26  15 Minute  2026-02-13 4:38 PM"
      titleAt={[52, 240]}
      atr="3 ATR = 234 USD"
      atrAt={[55, 303]}
      copyrightAt={[37, 1147]}
      price="57.17"
      tag={[1420, 712, 110, 56]}
    >
      <Band d="50,565 130,580 200,540 260,490 340,465 385,430 430,280 480,235 515,260 550,360 590,390 630,352 690,380 760,440 850,530 920,540 1000,500 1080,520 1140,590 1200,572 1250,620 1320,698 1375,680 1375,1020 1300,1070 1240,1040 1190,930 1140,880 1090,800 1030,740 940,722 880,750 830,735 790,700 740,710 690,760 640,830 600,870 570,875 530,800 490,740 430,735 390,690 330,665 270,690 200,770 120,775 50,740" />
      <path d="M590 112V1183" stroke="#6c6c76" strokeDasharray="4 2" vectorEffect="non-scaling-stroke" />
      <Line color="#bcbcc2" width={1} d="50,650 90,675 140,685 200,660 260,605 330,575 400,535 470,470 490,478 520,535 560,620 590,627 640,590 690,575 770,580 830,620 880,645 930,618 980,612 1040,620 1090,675 1140,730 1200,740 1250,820 1310,880 1340,875 1375,850" />
      <Line d="50,538 80,547 115,558 150,558 170,530 200,500 235,460 270,447 300,437 340,440 370,410 395,345 415,250 435,205 460,178 490,167 510,190 530,240 550,300 570,322 592,318 610,298 625,288 650,300 690,345 730,395 760,430 790,458 815,462 845,490 870,515 910,510 940,480 970,460 1000,450 1030,460 1060,475 1090,508 1145,547 1175,540 1200,520 1215,522 1240,560 1280,620 1320,652 1345,645 1375,636" />
      <Line d="50,760 70,762 100,790 125,809 185,816 210,800 250,755 285,720 325,705 380,700 395,720 410,762 430,792 460,785 480,780 500,810 530,860 555,915 580,941 595,932 620,918 650,860 680,805 720,765 760,740 790,724 810,740 835,770 880,777 910,762 945,754 985,773 1040,777 1075,808 1110,870 1140,925 1160,960 1185,970 1205,1020 1225,1065 1255,1100 1280,1118 1310,1122 1320,1110 1350,1090 1375,1057" />
      <Levels color="#1c8c8c" dash="4 1" d="47,592,455 599,1380,215" />
      <Levels color="#b2202c" dash="4 1" d="47,592,781 599,1380,491" />
      <Levels color="#f08080" dash="4 1" d="47,592,970 599,1380,918" />
      <Trend
        legs={[
          [YELLOW, "50,686 138,686"],
          [BLUE, "138,685 165,682"],
          [YELLOW, "165,680 190,678"],
          [BLUE, "190,678 210,675 240,640 280,610 320,597 345,592 375,565 395,535 415,530 435,505 465,485"],
          [YELLOW, "465,487 480,487"],
          [RED, "480,490 495,512 512,533 525,537"],
          [YELLOW, "525,536 800,536"],
          [RED, "800,538 820,545 860,582 875,588"],
          [YELLOW, "875,586 895,586"],
          [BLUE, "895,587 925,583"],
          [YELLOW, "935,583 1045,583"],
          [RED, "1045,583 1065,590 1100,650 1140,705 1190,718 1215,770 1260,835 1290,857 1310,857"],
          [YELLOW, "1310,855 1325,853"],
          [BLUE, "1325,853 1360,840"],
          [YELLOW, "1365,838 1377,838"],
        ]}
      />
      <Sticks
        x0={50}
        step={11.04}
        rows="635-670 648-712 703-780 722-765 700-752 722-780 690-765 672-712 640-702 635-690 522-650 515-620 560-612 550-608 480-582 487-545 492-545 490-548 505-550 510-573 505-548 485-552 515-560 528-565 540-580 555-602 515-598 408-525 460-515 465-545 360-520 215-485 255-570 430-588 315-545 345-460 340-455 320-475 390-475 410-595 540-740 698-780 700-833 765-825 798-920 798-915 660-828 610-728 498-638 455-555 403-615 510-580 465-555 480-525 505-565 550-582 505-555 540-595 565-615 560-590 585-628 590-612 585-612 572-608 575-600 585-608 602-612 605-670 660-785 708-782 685-722 692-720 690-730 692-720 635-685 590-660 572-608 570-605 555-630 495-580 512-585 528-605 550-662 645-695 555-665 545-610 575-662 640-672 640-690 612-700 665-755 705-790 710-740 742-832 812-895 812-915 788-878 798-880 822-940 820-940 690-830 700-770 662-762 712-928 820-960 905-1060 905-1005 870-990 912-1028 938-1028 938-1005 965-1010 895-1048 878-915 855-915 830-890 762-870 700-782 768-845 768-830 730-770 693-795"
      />
      <Up at="270,675,716 348,656,697" />
      <Down at="1198,640,680" />
    </Plot>
  );
}

// the daily series are stored in four blocks, each with its own scale
const blocks = {
  priceA: "translate(620 425) scale(.44643 .35714)",
  priceB: "translate(1315 425) scale(.45282 .35714)",
  studyA: "translate(620 970) scale(.44643 .33333)",
  studyB: "translate(1315 970) scale(.45282 .33333)",
};

function ChartDaily() {
  return (
    <Plot
      box={[630, 471, 1381, 885]}
      axisX={1963}
      axisY={1330}
      tick={4}
      xTextY={1346}
      xLabels={[["Jun", 711], ["Jul", 828], ["Aug", 956], ["Sep", 1079], ["Oct", 1201], ["Nov", 1335], ["Dec", 1446], ["26", 1574], ["Feb", 1690], ["Mar", 1800]]}
      yLabels={[["59.00", 485], ["58.00", 517], ["56.00", 582], ["55.00", 616], ["54.00", 650], ["53.00", 686], ["52.00", 721], ["51.00", 758], ["50.00", 795], ["49.00", 834], ["48.00", 872], ["47.00", 912], ["46.00", 951], ["3.5", 997], ["2.5", 1024], ["1.5", 1052], ["0.5", 1081], ["-0.5", 1109], ["-1.5", 1137], ["5", 1168], ["3", 1199], ["1", 1230], ["-1", 1261], ["-3", 1293], ["-5", 1324]]}
      title="Remek!  ZL MAR26  Daily  2026-02-13 4:38 PM"
      titleAt={[643, 520]}
      bigTitle
      atr="3 ATR = 1932 USD"
      atrAt={[643, 549]}
      copyrightAt={[634, 1317]}
      price="57.08"
      tag={[1960, 546, 50, 19]}
      notes={[
        { text: "57.92", at: [1707, 527], className: "text-sm leading-none text-[#3c8f78]" },
        { text: "54.87", at: [1707, 629], className: "text-sm leading-none text-[#c98a62]" },
        { text: "51.82", at: [1707, 737], className: "text-sm leading-none text-[#c8285c]" },
        { text: "~1R", at: [1771, 549], className: "bg-[#ecebc6] px-0.5 text-lg leading-6 font-bold text-[#a8282c]" },
      ]}
    >
      <Rules ys={[982, 1154]} x1={630} x2={2011} />
      <Rules ys={[1214, 1246, 1277]} x1={630} x2={1963} />
      <Rules ys={[1094]} x1={630} x2={1963} color="#b4b4c4" />

      <g transform={blocks.priceA}>
        <Band d="50,730 90,700 130,705 180,710 220,750 280,840 310,858 330,800 360,680 390,600 430,520 490,490 550,450 600,420 660,350 720,280 760,230 800,250 900,310 940,330 980,280 1010,300 1100,390 1180,430 1250,520 1330,640 1380,678 1470,675 1557,698 1557,1064 1480,1070 1400,1050 1330,1080 1270,1060 1220,1010 1160,960 1090,930 1050,885 970,880 900,790 840,700 800,660 740,645 700,680 600,830 500,1030 440,1180 400,1260 370,1350 340,1425 310,1415 250,1395 180,1330 130,1345 80,1380 50,1375" />
        <Band color={UPTREND} d="50,1075 100,1030 180,990 240,998 300,980 330,930 360,820 400,730 470,640 550,570 640,490 700,410 760,375 830,370 920,390 970,375 1020,395 940,402 860,430 800,460 740,530 660,610 600,690 530,740 470,820 420,900 370,990 320,1050 250,1065 190,1085 140,1140 50,1240" />
        <Band color="rgba(250,214,204,.4)" d="1020,395 1190,445 1280,540 1330,640 1390,740 1300,700 1180,480" />
        <Band color={DOWNTREND} d="1020,395 1080,405 1180,480 1250,560 1330,680 1400,770 1470,860 1557,914 1557,1000 1500,975 1430,920 1370,860 1310,760 1250,640 1190,510 1100,450" />
        <Line color="#bcbcc2" width={1} d="50,1060 70,1030 110,1018 160,1012 200,1035 240,1090 280,1125 310,1130 340,1100 370,990 400,870 460,800 520,700 600,630 680,500 740,430 780,430 850,490 940,575 990,568 1060,620 1130,705 1190,708 1240,780 1300,840 1360,865 1430,870 1490,862 1557,876" />
        <Line d="50,668 62,640 85,608 100,612 125,632 155,634 190,645 210,660 240,720 270,780 300,818 312,818 325,790 345,680 365,570 385,500 400,450 415,434 465,435 485,415 510,387 535,374 570,371 605,350 630,305 660,270 690,248 715,220 740,178 762,163 785,172 810,200 840,222 900,243 935,272 950,250 975,198 1000,210 1030,250 1070,320 1130,405 1145,425 1165,420 1185,410 1205,422 1240,480 1300,575 1330,600 1370,628 1420,629 1500,634 1540,643 1557,652" />
        <Line d="50,1466 70,1465 90,1473 115,1445 145,1422 180,1410 200,1428 225,1468 255,1484 285,1477 305,1468 320,1485 338,1515 352,1505 370,1420 385,1350 410,1300 450,1220 500,1110 550,1000 590,950 640,860 670,800 705,725 730,700 765,699 800,710 830,740 880,820 925,870 950,930 975,967 990,957 1050,955 1090,980 1120,1007 1160,1011 1200,1027 1225,1060 1250,1097 1290,1117 1328,1137 1355,1125 1385,1110 1430,1125 1460,1120 1495,1103 1530,1108 1557,1106" />
        <Trend
          legs={[
            [BLUE, "50,1087 80,1075 115,1060"],
            [YELLOW, "115,1059 350,1059"],
            [BLUE, "350,1059 375,1048 420,980 460,900 490,820 520,768 570,710 620,610 670,540 725,463"],
            [YELLOW, "735,460 755,460"],
            [RED, "755,460 790,470 815,482"],
            [YELLOW, "820,484 1080,484"],
            [RED, "1080,487 1105,500 1140,545 1160,556 1185,590 1220,670 1255,725 1290,775 1335,812 1350,816"],
            [YELLOW, "1352,817 1370,817"],
            [RED, "1380,820 1420,832"],
            [YELLOW, "1420,834 1557,834"],
          ]}
        />
        <Candles
          x0={50}
          step={13.04}
          rows="g663 690 762 816,r752 754 996 998,g948 1036 1073 1176,g957 984 1042 1083,g965 973 987 1033,g896 941 976 978,g985 1017 1049 1140,r894 896 994 1032,r908 968 994 1030,r940 969 1037 1070,r988 1021 1096 1167,r1156 1160 1258 1305,r1226 1256 1323 1327,g1248 1263 1295 1383,g1198 1264 1271 1304,r1238 1263 1283 1315,g1165 1187 1228 1252,g1147 1192 1201 1233,g1131 1157 1200 1200,g1106 1133 1161 1193,r1006 1130 1178 1243,g861 863 1178 1195,g420 422 706 708,r386 388 455 526,r391 437 454 503,r358 452 490 508,r422 466 607 622,r637 648 713 755,r639 706 748 763,g677 682 730 789,g646 682 692 732,g630 675 677 716,g570 576 675 711,g444 446 549 565,r432 453 491 504,r497 499 549 602,g499 531 553 574,r525 532 613 615,r560 572 596 637,g540 567 591 630,g514 527 579 629,g441 490 533 549,g444 463 487 497,g316 335 467 478,r248 326 374 385,g345 347 361 448,r349 351 388 427,g309 342 385 388,g293 295 330 351,r283 285 317 350,g297 312 328 354,g216 228 314 343,r189 228 290 298,r265 288 405 428,r387 404 481 504,g465 482 489 535,r437 489 549 560,r499 550 553 570,r540 545 574 605,r541 543 651 681,g547 602 644 672,r566 597 608 716,g531 583 607 644,r574 577 721 737,g599 602 712 757,g571 596 603 674,r596 600 752 760,r736 740 801 804,g534 559 800 806,g364 423 565 763,r387 427 467 470,r460 465 600 642,r575 597 632 653,r625 628 702 725,r695 704 734 776,g661 675 729 756,r661 676 762 765,g742 743 751 832,r725 745 822 825,g761 794 820 845,r778 790 900 908,g841 844 888 946,g779 784 845 847,g693 725 789 810,g648 717 738 752,g552 625 717 724,r610 625 768 771,r744 760 831 837,r810 827 885 888,r867 883 980 1013,g945 960 980 1063,g890 959 966 1010,g891 918 973 1000,r883 920 929 974,r920 922 979 1007,r965 987 1002 1018,g871 902 1001 1029,g870 900 904 935,r886 900 944 950,g886 905 948 957,g838 839 917 920,g790 794 836 840,r785 794 851 864,r822 843 949 980,g879 885 951 962,g878 883 887 976,r802 808 867 895,g767 858 863 865,g824 843 861 911,g799 812 836 848,r806 812 881 893,r848 879 942 950,g831 857 941 944,r852 854 920 922,g852 868 883 911,r865 874 920 946"
        />
        <Down at="871,403,441 1198,642,680 1405,710,748 1497,680,717" />
      </g>

      <g transform={blocks.priceB}>
        <Band d="0,698 60,725 120,740 170,730 210,680 260,675 340,655 410,680 460,740 520,830 570,880 640,890 700,810 760,680 800,620 860,520 932,390 932,850 890,940 840,1010 790,1090 740,1190 700,1240 620,1245 540,1210 470,1150 420,1060 370,1040 290,1110 260,1122 200,1125 110,1138 50,1120 0,1064" />
        <Band color={DOWNTREND} d="0,914 40,950 100,995 195,1020 150,1060 100,1072 50,1050 0,1000" />
        <Band color={UPTREND} d="195,1020 260,990 340,940 420,940 460,962 400,965 320,990 250,1010" />
        <Band color={DOWNTREND} d="470,962 560,980 650,1010 640,1045 580,1025 520,1000" />
        <Band color={UPTREND} d="715,1010 780,930 850,840 932,680 932,885 880,930 820,960 760,990" />
        <Line color="#bcbcc2" width={1} d="0,876 60,920 120,937 180,915 240,890 290,897 340,850 400,855 440,890 480,960 540,1020 600,1055 650,1065 700,1010 760,890 820,790 880,715 932,600" />
        <Line d="0,652 35,665 60,670 95,688 120,692 160,685 180,670 205,625 225,616 260,630 290,628 315,610 340,602 370,614 410,637 440,660 470,705 500,765 540,815 570,840 620,840 645,850 660,845 680,810 700,740 720,690 745,650 775,605 800,550 820,530 840,515 865,470 890,420 915,360 932,330" />
        <Line d="0,1106 20,1118 45,1155 70,1183 110,1194 135,1182 170,1170 200,1175 255,1184 280,1175 320,1130 355,1098 390,1085 420,1097 445,1150 480,1210 520,1245 555,1250 600,1290 625,1295 670,1288 695,1292 715,1275 755,1190 800,1090 830,1050 855,1033 890,980 915,930 932,880" />
        <Trend
          legs={[
            [YELLOW, "0,835 65,837"],
            [RED, "70,838 95,842"],
            [YELLOW, "95,843 410,843"],
            [RED, "418,843 440,860 470,925 500,970 560,1018 600,1032 635,1045"],
            [YELLOW, "635,1043 648,1040"],
            [BLUE, "650,1040 690,1016"],
            [YELLOW, "700,1016 740,1016"],
            [BLUE, "740,1013 765,1000 790,955 830,885 855,830 880,770 905,700 932,640"],
          ]}
        />
        <Candles
          x0={5}
          step={12.86}
          rows="r904 924 930 992,r921 931 987 1028,r965 975 1085 1096,g955 962 1077 1127,r939 956 995 1040,r959 976 988 1018,r913 988 1016 1023,g949 981 1014 1052,g886 887 988 990,g819 834 892 894,r812 838 883 915,r852 883 922 930,r870 912 930 938,g817 830 941 971,g698 727 834 854,r702 732 836 878,r799 848 884 893,r871 882 923 993,r901 916 921 1006,g884 913 941 1003,g852 877 919 931,g758 773 877 879,g734 743 775 803,g688 710 738 763,r704 711 811 815,g787 801 807 860,g729 799 807 810,r806 808 860 869,r837 861 876 894,g828 871 879 915,r857 871 899 938,r887 896 975 984,r961 975 1037 1055,r1036 1044 1157 1190,g1127 1140 1146 1217,r1105 1132 1183 1192,r1168 1183 1206 1248,g1126 1134 1202 1211,r1113 1143 1167 1180,g1080 1087 1166 1173,r1077 1090 1115 1130,r1095 1110 1112 1142,g1070 1095 1116 1134,r1072 1095 1191 1197,g1107 1110 1199 1223,g1034 1047 1110 1138,r991 1048 1101 1106,r1036 1100 1110 1113,g1076 1095 1115 1142,r1033 1070 1080 1088,g945 1006 1055 1059,g871 912 996 1018,r847 913 935 945,g727 734 934 998,r686 734 769 806,r712 764 774 791,g619 630 780 794,r604 636 654 675,g571 633 654 668,r563 622 643 652,g581 592 658 673,r540 592 604 620,r555 600 632 680,r622 627 682 703,r685 686 710 769,g557 585 695 698,g454 471 584 612,g441 473 481 520,r427 471 504 541,g371 374 488 490,g312 322 374 413,r295 320 343 368,g262 299 317 363,r285 309 342 382"
        />
        <Strokes width={1} color="#9a9aa6" d="M866 261V848" />
        <Strokes width={1.4} color="#4c9a86" d="M866 261H1430" />
        <Strokes width={1.4} color="#d09a74" d="M866 547H1430" />
        <Strokes width={1.4} color="#d03468" d="M866 848H1430" />
        <polygon points="752,494 919,667 851,847 687,676" fill="#f2f276" fillOpacity=".5" />
        <Strokes d="M752 494L919 667M687 676L851 847" />
        <ellipse cx="842" cy="672" rx="65" ry="83" fill="#f2ee40" fillOpacity=".5" stroke="#b8281e" strokeWidth="1.8" vectorEffect="non-scaling-stroke" />
        <Strokes color="#b2222c" d="M944 652L1019 518" />
        <path d="M1026 502l2 24-20-10z" fill="#b2222c" stroke="#b2222c" />
        <Down at="623,908,946" />
        <Up at="854,738,775" />
        <Strokes color="#66666c" d="M1394 202H1346M1366 176L1346 202L1366 228" />
      </g>

      <rect x="921" y="497" width="821" height="26" fill="#f2f276" fillOpacity=".45" stroke="#b8281e" strokeWidth="1.6" vectorEffect="non-scaling-stroke" />

      <g transform={blocks.studyA}>
        <Line color="#8c5034" d="50,317 85,343 115,352 150,348 200,357 235,385 275,432 300,455 322,463 340,458 375,400 410,290 440,200 465,160 485,150 510,157 545,205 575,265 600,300 630,317 660,320 690,312 740,283 765,277 800,295 830,335 870,400 910,460 940,488 960,491 1000,465 1060,408 1085,401 1120,408 1165,432 1200,441 1250,426 1270,424 1310,432 1360,440 1390,435 1430,402 1475,370 1520,352 1545,349 1557,350" />
        <Line color="#10107a" d="50,357 75,352 100,333 115,328 130,335 155,372 180,380 200,400 218,435 232,450 255,490 270,508 285,508 300,480 325,415 350,300 385,150 415,75 428,64 440,100 465,185 485,240 505,268 525,280 560,318 585,353 598,355 620,325 650,285 675,265 700,262 750,285 780,335 810,400 840,480 865,502 885,504 920,502 940,480 970,430 988,402 1005,393 1030,367 1042,369 1055,385 1080,435 1105,457 1135,458 1165,430 1185,427 1205,408 1225,402 1250,417 1275,455 1290,463 1305,460 1340,433 1365,417 1395,385 1440,340 1460,337 1490,352 1535,355 1557,374" />
        <Histogram
          x0={50}
          step={13.04}
          zero={827}
          bars="702n 762 810 805 801 787 846 846 843 839 837 904 908 885 861 857 843 853 876 904 930r 843 651n 694n 716n 741 748 786 791 786 771 750 736 717n 725n 737 744 751 751 745 729n 710n 812 804 801 811 793 756 743 743 750 739 750 801 822 813 819 816 824 838 838 860 858 906 902 878 890 904 884 864 850 893 918 910 910 890 900 909 910 905 947r 962r 952r 868 858 839 831 836 925r 1022r 1043r 956r 929r 908 907 927r 896 870 871 867 828 806 836 877 887 909 867 828 826 788 791 815 812 820 803 803"
        />
        <Line color="#10107a" d="50,743 62,750 80,770 115,794 130,808 155,824 180,832 200,865 220,888 245,895 275,896 310,904 325,895 345,840 365,790 385,760 410,748 440,733 465,727 490,713 530,711 550,722 570,742 620,760 645,775 705,777 728,769 770,788 830,818 855,835 885,875 925,914 940,915 965,905 990,907 1015,917 1080,913 1120,932 1140,920 1165,895 1185,880 1200,888 1220,920 1245,937 1290,933 1330,907 1370,876 1400,862 1420,857 1440,835 1465,813 1530,802 1557,797" />
      </g>

      <g transform={blocks.studyB}>
        <Line color="#8c5034" d="0,350 35,368 80,392 110,410 135,416 165,411 195,392 230,360 270,340 300,334 345,340 385,342 430,357 460,380 490,425 520,465 550,488 580,491 605,480 650,430 700,365 740,310 790,245 830,213 850,210 880,220 905,237 930,250" />
        <Line color="#10107a" d="0,374 30,405 55,420 75,422 95,431 110,427 140,390 165,365 190,330 210,321 245,335 275,335 290,345 310,350 330,345 345,335 370,335 385,348 410,395 440,440 470,480 495,515 510,524 525,518 550,480 600,408 630,385 655,355 675,320 705,285 750,210 780,187 800,187 820,205 840,237 865,258 885,277 900,279 918,270 932,247" />
        <Histogram
          x0={5}
          step={12.86}
          zero={827}
          bars="829 854 877 866 878 900 887 855 830 798 835 860 858 855 770 765 816 843 865 846 793 720n 675n 702n 746 765 752 769 806 835 836 849 866 925r 962r 922r 910 878 873 863 875 892 900 920r 912 890 901 898 905 908 872 822 780 716n 717n 738 726n 740 748 755 762 757 762 762 769 757 738 722n 714n 690n 665n 647n 597n 582n"
        />
        <Line color="#10107a" d="0,797 20,808 50,835 95,858 125,859 165,870 180,857 210,826 240,824 260,812 285,765 305,740 350,735 385,758 415,800 440,855 480,905 515,938 530,941 545,935 570,935 600,922 620,910 640,906 660,875 685,820 725,765 770,715 800,704 830,710 885,718 905,712 925,690 944,665" />
      </g>
    </Plot>
  );
}

/* ---------- right column ---------- */

const activeTab = "border-2 border-t-0 border-[#1f7fd0] bg-[#1e1e1e] font-bold text-[#2088e0]";

function ControlCenter() {
  return (
    <section className="flex h-[243px] shrink-0 flex-col">
      <header className="flex h-[26px] shrink-0 items-center bg-linear-to-b from-[#505050] to-[#484848] pr-0.5 pl-[7px]">
        <h1 className="font-['Inter',sans-serif] text-[23px] leading-none font-semibold text-[#ee4a10]">NINJATRADER</h1>
        <div className="flex flex-1 items-center justify-end">
          <button aria-label="New" className="mr-7">
            <Icon name="newWindow" />
          </button>
          <button aria-label="Tools" className="mr-7">
            <Icon name="tools" />
          </button>
          <button aria-label="Workspaces" className="mr-3.5">
            <Icon name="windows" />
          </button>
          <button className="mr-1 flex h-[21px] w-[72px] items-center justify-center gap-0.5 border border-[#c6c6c6] text-sm leading-none font-bold text-[#d2d2d2]">
            <Icon name="tv" />
            Watch
          </button>
          <WindowButtons />
        </div>
      </header>
      <div className="mt-2.5 mr-[5px] ml-[7px] min-h-0 flex-1 border border-[#3e3e42] bg-[#1e1e1e]">
        <table className="w-full table-fixed text-left text-[15px]">
          <thead>
            <tr className="h-[35px] border-b border-[#3e3e42] text-[#cfcfcf]">
              <th className="w-[73px] border-r border-[#3e3e42] pl-2 font-normal">Account</th>
              <th className="border-r border-[#3e3e42] pl-2 font-normal">Instrument</th>
              <th className="border-r border-[#3e3e42] pl-2 font-normal">Action</th>
              <th className="border-r border-[#3e3e42] pl-2 font-normal">Quantity</th>
              <th className="pl-2 font-normal">Limit</th>
            </tr>
          </thead>
        </table>
      </div>
      <nav className="flex h-[43px] shrink-0 items-start pl-5 text-base text-[#c4c4c4]">
        <span className="mt-1 mr-4 size-6 rounded-full bg-radial-[at_45%_20%] from-[#b8f0b0] via-[#27b81c] to-[#1da512]" />
        <button className="h-7 w-[93px] bg-[#3c3c42] pl-2 text-left">Accounts</button>
        <button className="ml-0.5 h-7 w-[94px] bg-[#3c3c42] pl-2 text-left">Positions</button>
        <button className={`h-[33px] w-[97px] pb-1 pl-2 text-left ${activeTab}`}>Orders</button>
        <button aria-label="Add tab" className="flex h-7 w-[30px] items-center justify-center bg-[#3c3c42]">
          <Plus className="size-5" strokeWidth={4} />
        </button>
      </nav>
    </section>
  );
}

function TradePerformance() {
  return (
    <section className="flex h-[261px] shrink-0 flex-col">
      <header className="flex h-[29px] shrink-0 items-center justify-between bg-[#4b4b4b] pr-0.5">
        <Tag>Trade Performance</Tag>
        <WindowButtons />
      </header>
      <div className="mt-2.5 mr-[5px] ml-[7px] flex h-[45px] shrink-0 items-center overflow-hidden bg-[#636363] pl-2">
        <label htmlFor="display" className="w-[58px] shrink-0 text-[15px] text-[#d0d0d0]">
          Display
        </label>
        <div className="h-7 w-[163px] shrink-0">
          <Picker id="display" value="Trades ($)" />
        </div>
        <div className="ml-4 h-7 w-[145px] shrink-0">
          <Picker icon label="Start date" value="2025-12-31" />
        </div>
        <div className="ml-2 h-7 w-[145px] shrink-0">
          <Picker icon label="End date" value="2026-02-13" />
        </div>
      </div>
      <div className="mr-[5px] ml-[7px] min-h-0 flex-1 border border-t-0 border-[#3e3e42] bg-[#1e1e1e] p-2">
        <div className="h-full border border-[#4a4a4a] font-['Liberation_Sans',sans-serif]">
          <table className="w-full table-fixed text-left text-[15px]">
            <thead>
              <tr className="h-[35px] border-b border-[#3e3e42] text-[#cfcfcf] [&>th]:border-r [&>th]:border-[#3e3e42] [&>th]:font-normal [&>th]:whitespace-nowrap">
                <th className="w-2" />
                <th className="w-[52px] pl-2">
                  En
                  <svg viewBox="0 0 12 7" className="ml-2 inline h-1.5 w-2 fill-current" aria-hidden="true">
                    <path d="M0 0h12L6 7z" />
                  </svg>
                </th>
                <th className="w-2" />
                <th className="w-2" />
                <th className="w-2" />
                <th className="w-2" />
                <th className="w-2" />
                <th className="w-2" />
                <th className="w-[97px] pl-2">Exit time</th>
                <th className="pl-2">Exit price</th>
                <th className="w-[19px] overflow-hidden pl-2">
                  <div className="w-[3px] overflow-hidden">F</div>
                </th>
              </tr>
            </thead>
          </table>
        </div>
      </div>
      <nav className="flex h-[41px] shrink-0 items-start pl-8 text-base">
        <button className={`h-[33px] w-[97px] pb-1 pl-2 text-left ${activeTab}`}>Report</button>
        <button aria-label="Add report" className="flex h-7 w-[30px] items-center justify-center bg-[#3c3c42] text-[#c4c4c4]">
          <Plus className="size-5" strokeWidth={4} />
        </button>
      </nav>
    </section>
  );
}

const columns = ["Instru", "Day", "RRR", "RIB", "HZ", "Setup", "Signa", "KSc", "RRS", "RC"];

const rows = `6A MA|28|-0.89|0|0|0|0|1.21|103.3|650
6B MA|28|-0.15|LT|0|0|LONG|0.11|100.5|575
6C MA|31|-0.87|0|L|SHOR|0|0.47|94.9|400
6E MA|28|-0.23|IB|0|0|0|0.3|102.6|912
6J MA|28|-0.02|0|0|0|LONG|0.95|89.2|712
6N MA|28|-0.64|LT|0|0|0|0.68|97.2|525
6S MA|28|0.13|IB|0|SHOR|0|0.57|104.1|1375
CL MA|4|-1.25|0|0|0|0|0.14|88.9|2050
ES MA|31|-2.1|0|S|0|0|-0.46|100.1|4638
FDXS|32|-0.3|LT|S|0|0|-0.03|99.1|376
GC AP|42|-0.89|0|0|0|0|0.01|145.6|19030
HG MA|11|-1.25|0|S|0|0|-0.26|105.9|5512
HO MA|3|-0.8|0|0|0|0|0.14|104.4|3394
MBT F|7|-0.7|0|S|0|0|-1.86|57|449
NG MA|10|0.15|LT|0|0|LONG|0.1|89.9|3550
NQ MA|31|-2|0|S|0|0|-0.7|100.1|9775
PA MA|11|-0.73|0|S|0|0|-0.57|144.4|14800
PL AP|42|-0.81|0|S|0|0|-0.7|163.8|9995
RTY M|31|-1.68|0|S|0|0|-0.39|103.2|2730
RB MA|4|-1.64|0|0|0|0|0.21|93.5|2302
SI MA|11|-0.85|0|S|0|0|-0.7|197.8|46475
YM MA|31|-1.65|0|0|0|0|0.08|99.2|3280
ZB MA|14|2.48|0|L|0|0|1.14|96|875
ZC MA|0|1.26|0|0|0|0|0.37|73.4|288
ZF MA|14|2.05|0|L|0|0|1.11|94.4|266
ZL MA|1|0.67|0|0|0|0|1.38|111.1|648
ZN MA|14|2.31|0|L|0|0|1.19|95.6|422
ZO MA|0|0.85|0|L|0|0|0.51|83.4|412
ZS MA|1|1.55|0|0|0|0|1.73|96.9|850
ZW M|0|2.27|0|0|0|0|1.29|77.6|512`
  .split("\n")
  .map((r) => r.split("|"));

const good = "bg-[#006400] text-[#32e632]";
const bad = "bg-[#8b0000] text-[#f01414]";

function cellStyle(col: number, v: string, selected: boolean) {
  const n = Number(v);
  if (col === 0) return "text-white";
  if (col === 1 && n <= 1) return selected ? "bg-[#65624c] text-black" : "bg-[#f0e68c] text-black";
  if (col === 2 && n > 2) return good;
  if (col === 2 && n < -2) return bad;
  if (col === 3 && v !== "0") return "bg-[#4682b4] text-white/55";
  if (v === "L" || v === "LONG") return good;
  if (v === "S" || v === "SHOR") return bad;
  if (col === 7 && n > 1) return good;
  if (col === 7 && n < -1) return bad;
  return "text-white/45";
}

// heat shading for the two ranked columns
function heat(col: number, v: string) {
  if (col < 8) return undefined;
  const [lo, hi] = col === 8 ? [57, 197.8] : [266, 46475];
  const a = (Number(v) - lo) / (hi - lo);
  return { backgroundColor: `rgba(70,130,180,${a.toFixed(2)})` };
}

function MarketAnalyzer() {
  return (
    <section className="flex min-h-0 flex-1 flex-col">
      <header className="flex h-[29px] shrink-0 items-center justify-between bg-[#4b4b4b] pr-0.5">
        <Tag>Market Analyzer</Tag>
        <WindowButtons colors={["green"]} />
      </header>
      <div className="mt-[9px] mr-[7px] ml-[5px] min-h-0 flex-1 border border-[#3e3e42] bg-[#1e1e1e] pb-2">
        <table className="h-full w-full table-fixed border-collapse text-left font-['Liberation_Sans',sans-serif] text-[15px] leading-none">
          <colgroup>
            <col className="w-[49px]" />
            <col className="w-[42px]" />
            <col className="w-12" />
            <col className="w-[37px]" />
            <col className="w-[37px]" />
            <col className="w-[54px]" />
            <col className="w-[53px]" />
            <col className="w-[42px]" />
            <col className="w-[54px]" />
            <col className="w-[52px]" />
          </colgroup>
          <thead>
            <tr className="h-[35px] border-b border-[#3e3e42] text-[#cfcfcf]">
              {columns.map((c) => (
                <th key={c} className="border-r border-[#3e3e42] pr-1 pl-2 font-normal last:border-r-0">
                  <div className="overflow-hidden leading-5 whitespace-nowrap">{c}</div>
                </th>
              ))}
            </tr>
          </thead>
          <tbody>
            {rows.map((r) => {
              const selected = r[0].startsWith("ZL");
              return (
                <tr key={r[0]} className={selected ? "bg-[#343436]" : ""}>
                  {r.map((v, i) => (
                    <td
                      key={i}
                      className={`overflow-hidden border-r border-[#3e3e42] pl-2 whitespace-nowrap last:border-r-0 ${cellStyle(i, v, selected)}`}
                      style={heat(i, v)}
                    >
                      {v}
                    </td>
                  ))}
                </tr>
              );
            })}
          </tbody>
        </table>
      </div>
      <nav className="mr-[9px] ml-[30px] flex h-9 shrink-0 items-start text-base text-[#c4c4c4]">
        <button aria-label="Previous tabs" className="flex h-[30px] w-6 items-center justify-center bg-[#3c3c42] text-[#6a6a6a]">
          <svg viewBox="0 0 8 14" className="h-3 w-2 fill-current" aria-hidden="true">
            <path d="M8 0v14L0 7z" />
          </svg>
        </button>
        <button className={`h-[34px] w-[166px] pl-2 text-left whitespace-nowrap ${activeTab}`}>Remek! Premium</button>
        <button className="h-[30px] w-[94px] bg-[#3c3c42] pl-2 text-left">Micros</button>
        <button className="ml-0.5 h-[30px] flex-1 bg-[#3c3c42] pl-2 text-left">PREMIUM+</button>
        <button aria-label="Add tab" className="flex h-[30px] w-8 items-center justify-center bg-[#3c3c42]">
          <Plus className="size-5" strokeWidth={4} />
        </button>
        <button aria-label="Next tabs" className="ml-px flex h-[30px] w-[22px] items-center justify-center bg-[#3c3c42]">
          <svg viewBox="0 0 8 14" className="h-3 w-2 fill-current" aria-hidden="true">
            <path d="M0 0v14l8-7z" />
          </svg>
        </button>
      </nav>
    </section>
  );
}

export default function App() {
  return (
    <main className="grid h-screen grid-cols-[minmax(0,620fr)_minmax(0,1396fr)_minmax(0,484fr)] overflow-hidden bg-[#2b2b2d] font-['Open_Sans',sans-serif]">
      {/* Left charts */}
      <div className="grid min-h-0 grid-rows-[minmax(0,672fr)_minmax(0,688fr)] border-r border-[#222224]">
        <section className="flex min-h-0 flex-col">
          <ChartHeader top period="240 Minute" tools={["candles"]} />
          <div className="flex min-h-0 flex-1 pt-[11px] pr-1.5 pb-2 pl-2">
            <Chart240 />
          </div>
        </section>
        <section className="flex min-h-0 flex-col">
          <ChartHeader period="Weekly" tools={["candles"]} />
          <div className="flex min-h-0 flex-1 pt-[11px] pr-1.5 pb-1 pl-2">
            <ChartWeekly />
          </div>
        </section>
      </div>

      {/* Middle charts */}
      <div className="grid min-h-0 grid-rows-[minmax(0,432fr)_minmax(0,928fr)]">
        <div className="grid min-h-0 grid-cols-2">
          <section className="flex min-h-0 flex-col pl-1">
            <ChartHeader top period="60 Minute" tools={["bars", "pencil", "zoomIn"]} />
            <div className="flex min-h-0 flex-1 pt-[11px] pr-[7px] pb-3 pl-1.5">
              <Chart60 />
            </div>
          </section>
          <section className="flex min-h-0 flex-col pl-1">
            <ChartHeader top period="15 Minute" tools={["bars", "pencil", "zoomIn"]} />
            <div className="flex min-h-0 flex-1 pt-[11px] pr-[7px] pb-3 pl-1.5">
              <Chart15 />
            </div>
          </section>
        </div>
        <section className="flex min-h-0 flex-col pl-1">
          <ChartHeader
            period="Daily"
            more={false}
            tools={["candles", "pencil", "zoomIn", "zoomOut", "cursor", "doc", "panel", "chart", "nodes", "clipboard", "list"]}
          />
          <div className="flex min-h-0 flex-1 pt-[11px] pr-[5px] pb-1 pl-1.5">
            <ChartDaily />
          </div>
        </section>
      </div>

      {/* Control panels */}
      <div className="flex min-h-0 flex-col border-l border-[#3a3a3c] pl-[3px]">
        <ControlCenter />
        <TradePerformance />
        <header className="mb-[3px] flex h-[29px] shrink-0 items-center bg-[#4b4b4b] pr-0.5">
          <span className="h-full w-8 bg-[#0a8286]" />
          <Tag>SuperDOM</Tag>
          <div className="flex-1" />
          <WindowButtons colors={["blue"]} />
        </header>
        <MarketAnalyzer />
      </div>
    </main>
  );
}
